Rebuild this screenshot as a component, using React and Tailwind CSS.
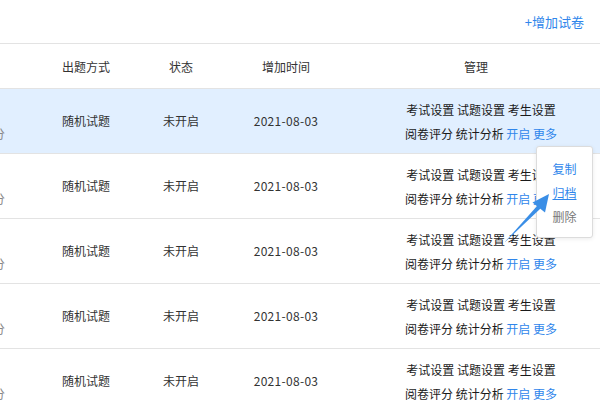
import React from "react";

const rows = [0, 1, 2, 3, 4];

function Row({ highlight }) {
  return (
    <div
      className={`grid grid-cols-[36px_100px_90px_120px_1fr] h-[65px] border-b border-[#e3e3e3] shrink-0 ${
        highlight ? "bg-[#e1efff]" : "bg-white"
      }`}
    >
      <div className="flex flex-col justify-center items-end w-[5px] overflow-hidden leading-[24px] text-[#888] pt-[2px]">
        <div className="whitespace-nowrap">&nbsp;</div>
        <div className="whitespace-nowrap">得分</div>
      </div>
      <div className="flex items-center justify-center text-[#333]">随机试题</div>
      <div className="flex items-center justify-center text-[#333]">未开启</div>
      <div className="flex items-center justify-center text-[#333] tracking-[0.3px]">2021-08-03</div>
      <div className="flex flex-col items-center justify-center pl-[16px] leading-[24px] text-[#1a1a1a] pt-[2px]">
        <div className="whitespace-nowrap">考试设置 试题设置 考生设置</div>
        <div className="whitespace-nowrap">
          阅卷评分 统计分析 <span className="text-[#2f86eb]">开启</span>{" "}
          <span className="text-[#2f86eb]">更多</span>
        </div>
      </div>
    </div>
  );
}

export default function App() {
  return (
    <div
      className="relative w-[600px] h-[400px] overflow-hidden bg-white text-[12px]"
      style={{ fontFamily: '"Noto Sans CJK SC", "Noto Sans", sans-serif' }}
    >
      <div className="h-[44px] border-b border-[#e3e3e3] flex items-center justify-end pr-[16px]">
        <span className="text-[13px] text-[#2f86eb]">+增加试卷</span>
      </div>
      <div className="grid grid-cols-[36px_100px_90px_120px_1fr] h-[45px] border-b border-[#e3e3e3] text-[#333] pt-[2px]">
        <div />
        <div className="flex items-center justify-center">出题方式</div>
        <div className="flex items-center justify-center">状态</div>
        <div className="flex items-center justify-center">增加时间</div>
        <div className="flex items-center justify-center pl-[6px]">管理</div>
      </div>
      <div className="flex flex-col">
        {rows.map((r) => (
          <Row key={r} highlight={r === 0} />
        ))}
      </div>

      <div className="absolute left-[536px] top-[146px] w-[57px] h-[92px] bg-white border border-[#dcdcdc] rounded-[3px] shadow-[0_1px_4px_rgba(0,0,0,0.08)] flex flex-col items-center pt-[10px] leading-[24px]">
        <span className="text-[#2f86eb]">复制</span>
        <span className="text-[#2f86eb] underline">归档</span>
        <span className="text-[#777]">删除</span>
      </div>

      <svg
        className="absolute left-[500px] top-[185px]"
        width="60"
        height="65"
        viewBox="0 0 60 65"
      >
        <polygon
          points="4.6,57.3 5.4,56.7 40.5,23.4 37.5,20.6"
          fill="#3a8ee6"
        />
        <polygon points="49,9 32.5,17.5 45,27.5" fill="#3a8ee6" />
      </svg>
    </div>
  );
}
